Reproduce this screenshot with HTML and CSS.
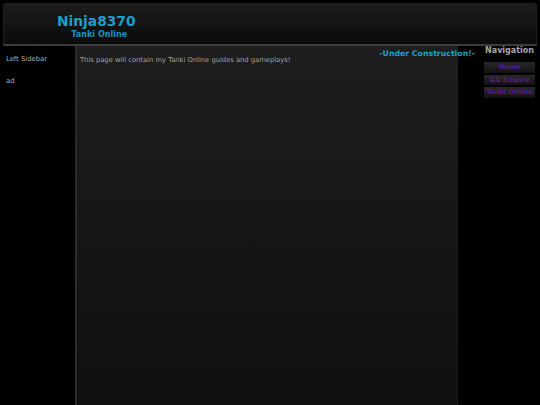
FILE: index.html
```html
<!DOCTYPE html>
<html>
<head>
<meta charset="utf-8">
<title>Ninja8370 - Tanki Online</title>
<link rel="stylesheet" href="styles.css">
</head>
<body>
<div class="page">
  <div class="header">
    <div class="brand">
      <h1 class="site-title">Ninja8370</h1>
      <div class="site-sub">Tanki Online</div>
    </div>
  </div>
  <div class="columns">
    <div class="left">
      <p class="side-text">Left Sidebar</p>
      <p class="side-text">ad</p>
    </div>
    <div class="content">
      <div class="notice">-Under Construction!-</div>
      <p class="body-text">This page will contain my Tanki Online guides and gameplays!</p>
    </div>
    <div class="right">
      <div class="nav-title">Navigation</div>
      <div class="nav">
        <a class="nav-btn" href="#">Home</a>
        <a class="nav-btn" href="#">GG Empire</a>
        <a class="nav-btn" href="#">Tanki Online</a>
      </div>
    </div>
  </div>
</div>
</body>
</html>
```

FILE: styles.css
```css
html, body {
  margin: 0;
  padding: 0;
  background: #000;
  height: 100%;
}
body {
  font-family: "DejaVu Sans", Verdana, sans-serif;
}
.page {
  display: flex;
  flex-direction: column;
  height: 100vh;
  padding-top: 3px;
  box-sizing: border-box;
}
.header {
  margin: 0 3px;
  background: linear-gradient(#1c1c1c, #0b0b0b);
  border: 1px solid #1e1e1e;
  border-bottom: 2px solid #3d3d3d;
  border-radius: 3px 3px 0 0;
  box-sizing: border-box;
  height: 43px;
  padding: 10px 0 0 53px;
}
.brand {
  display: inline-block;
  text-align: center;
}
.site-title {
  margin: 0;
  font-size: 13.8px;
  line-height: 14px;
  font-weight: bold;
  color: #1d9fcb;
}
.site-sub {
  margin-top: 1px;
  font-size: 8.1px;
  line-height: 10px;
  font-weight: bold;
  color: #1a93c0;
  padding-left: 6px;
}
.columns {
  flex: 1;
  display: flex;
}
.left {
  width: 75px;
  padding: 9px 0 0 6px;
  box-sizing: border-box;
}
.side-text {
  margin: 0 0 12.5px;
  font-size: 6.8px;
  line-height: 9px;
  color: #b0b0b0;
}
.content {
  width: 383px;
  box-sizing: border-box;
  background: linear-gradient(#1e1e1e, #0f0f0f);
  border-left: 2px solid #2b2b2b;
  border-right: 1px solid #1c1c1c;
  padding: 3px 0 0 3px;
}
.notice {
  text-align: right;
  margin-right: -18px;
  margin-bottom: -3px;
  font-size: 7.8px;
  line-height: 10px;
  font-weight: bold;
  color: #1d9fcb;
}
.body-text {
  margin: 0;
  font-size: 6.75px;
  line-height: 9px;
  color: #a0a0a0;
}
.right {
  width: 82px;
  box-sizing: border-box;
  padding: 0 5px 0 26px;
}
.nav-title {
  text-align: center;
  font-size: 8px;
  line-height: 9px;
  font-weight: bold;
  color: #a6a6a6;
  margin-top: 0;
}
.nav {
  margin-top: 7px;
  display: flex;
  flex-direction: column;
  gap: 2px;
}
.nav-btn {
  display: block;
  height: 10.5px;
  line-height: 10.5px;
  text-align: center;
  font-size: 6.75px;
  font-weight: bold;
  color: #551a8b;
  text-decoration: none;
  background: linear-gradient(#282828, #121212);
}
```
